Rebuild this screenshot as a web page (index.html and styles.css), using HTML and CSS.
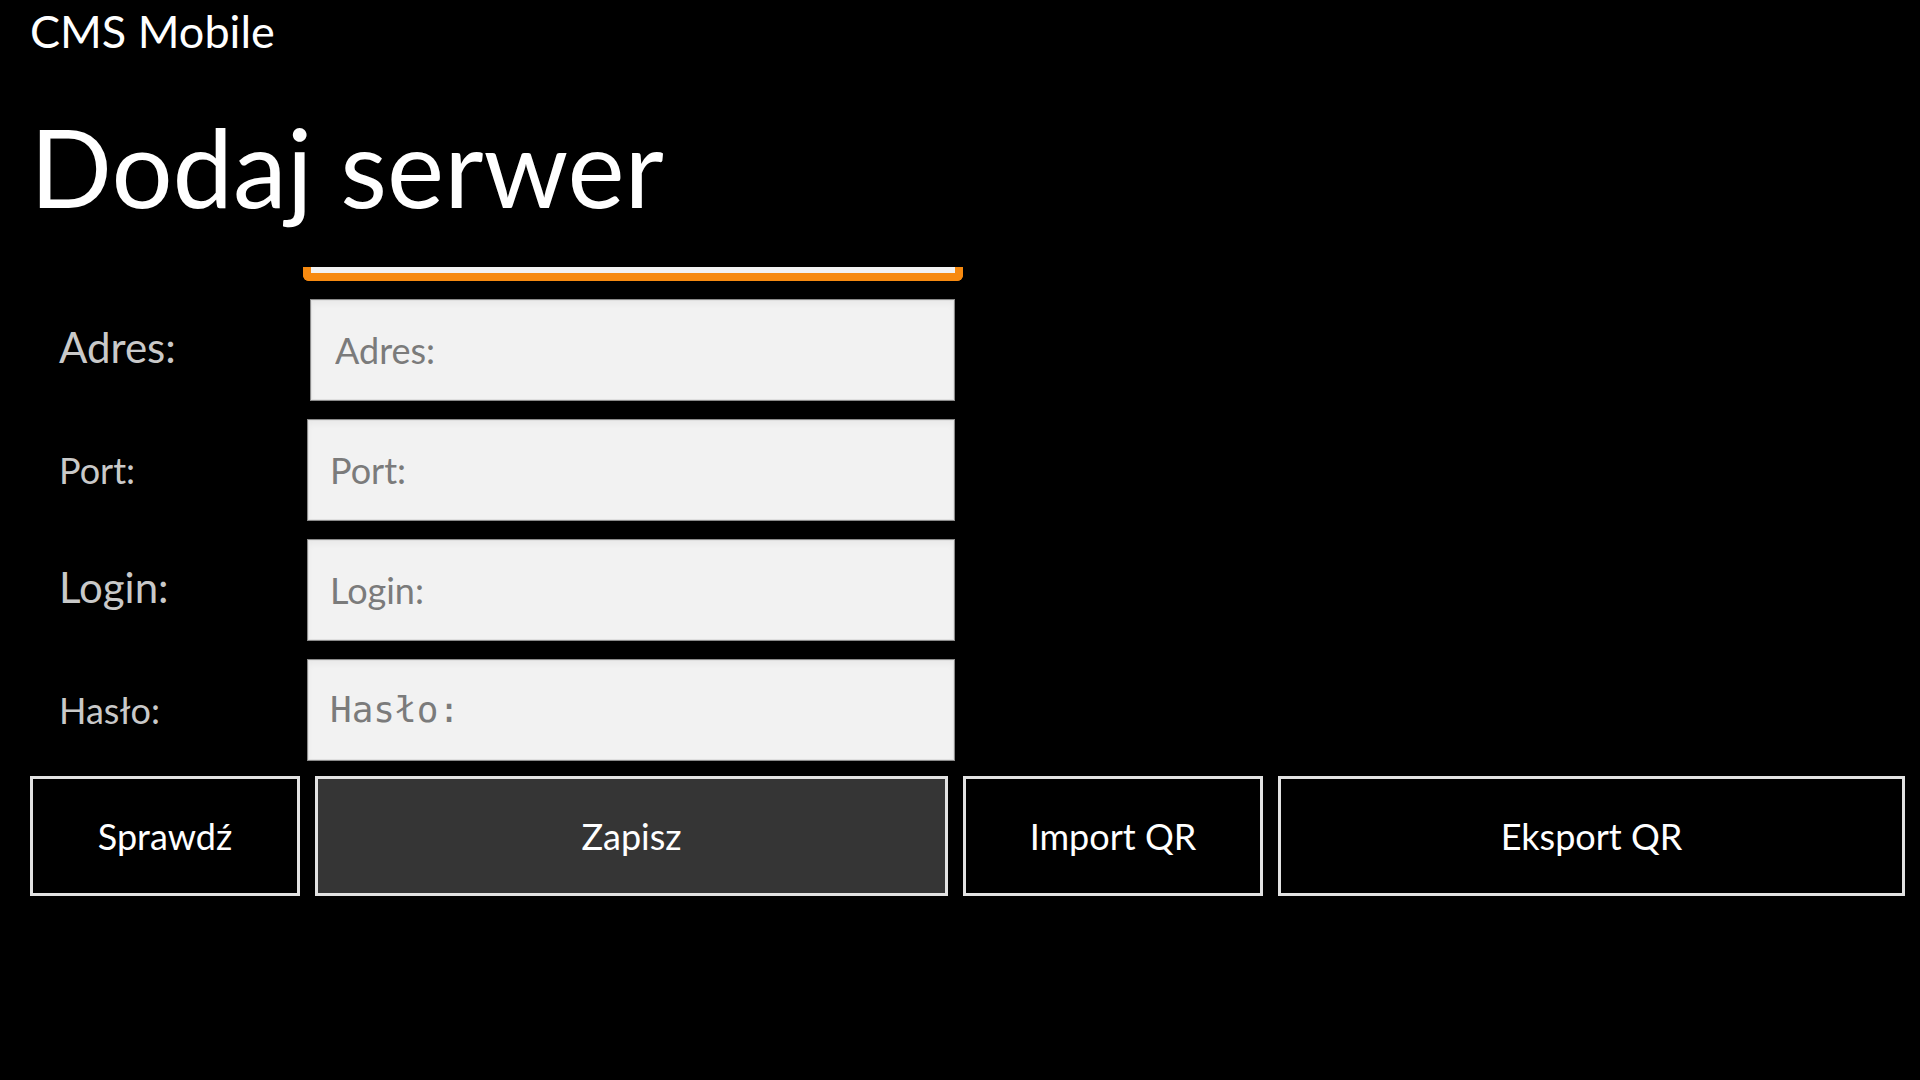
FILE: index.html
```html
<!DOCTYPE html>
<html lang="pl">
<head>
    <meta charset="UTF-8">
    <meta name="viewport" content="width=device-width, initial-scale=1.0">
    <title>CMS Mobile - Dodaj serwer</title>
    <link rel="stylesheet" href="styles.css">
</head>
<body>
    <header class="app-header">
        <div class="app-name">CMS Mobile</div>
        <h1 class="page-title">Dodaj serwer</h1>
    </header>

    <main class="server-form">
        <div class="focus-edge"></div>

        <div class="field-row">
            <label for="address" class="field-label field-label-large">Adres:</label>
            <input type="text" id="address" class="field-input field-input-inset" placeholder="Adres:">
        </div>

        <div class="field-row">
            <label for="port" class="field-label">Port:</label>
            <input type="text" id="port" class="field-input" placeholder="Port:">
        </div>

        <div class="field-row">
            <label for="login" class="field-label field-label-large">Login:</label>
            <input type="text" id="login" class="field-input" placeholder="Login:">
        </div>

        <div class="field-row">
            <label for="password" class="field-label">Hasło:</label>
            <input type="password" id="password" class="field-input field-input-mono" placeholder="Hasło:">
        </div>
    </main>

    <div class="actions">
        <button class="action-button">Sprawdź</button>
        <button class="action-button action-button-primary">Zapisz</button>
        <button class="action-button">Import QR</button>
        <button class="action-button">Eksport QR</button>
    </div>
</body>
</html>
```

FILE: styles.css
```css
body {
    margin: 0;
    background-color: #000;
    color: #fff;
    font-family: Lato, 'Open Sans', sans-serif;
}
.app-header {
    padding: 4px 0 0 30px;
}
.app-name {
    font-size: 45px;
    line-height: 1.2;
}
.page-title {
    margin: 44px 0 0 0;
    font-size: 108px;
    font-weight: 400;
    line-height: 1.2;
}
.server-form {
    margin-top: 35px;
}
.focus-edge {
    margin-left: 303px;
    width: 644px;
    height: 6px;
    background-color: #f2f2f2;
    border: 8px solid #f78a10;
    border-top: none;
    border-radius: 0 0 6px 6px;
}
.field-row {
    display: grid;
    grid-template-columns: 307px 648px;
    align-items: center;
    margin-top: 18px;
}
.field-label {
    padding-left: 59px;
    color: #c9c9c9;
    font-size: 36px;
}
.field-label-large {
    padding-bottom: 6px;
    font-size: 42px;
}
.field-input {
    height: 102px;
    padding: 0 22px;
    box-sizing: border-box;
    background-color: #f2f2f2;
    border: 1px solid #8a8a8a;
    box-shadow: inset 0 0 0 1px #e0e0e0, inset 0 4px 6px rgba(0, 0, 0, 0.04);
    border-radius: 0;
    font-family: Lato, 'Open Sans', sans-serif;
    font-size: 36px;
    color: #333;
    outline: none;
}
.field-input::placeholder {
    color: #7b7b7b;
}
.field-input-inset {
    margin-left: 3px;
    padding-left: 24px;
}
.field-input-mono {
    font-family: 'DejaVu Sans Mono', monospace;
    font-size: 36px;
}
.actions {
    display: grid;
    grid-template-columns: 270px 633px 300px 627px;
    gap: 15px;
    padding-left: 30px;
    margin-top: 15px;
}
.action-button {
    height: 120px;
    background-color: #000;
    color: #fff;
    border: 3px solid #e2e2e2;
    border-radius: 0;
    font-family: Lato, 'Open Sans', sans-serif;
    font-size: 36px;
    cursor: pointer;
}
.action-button-primary {
    background-color: #353535;
}
```
